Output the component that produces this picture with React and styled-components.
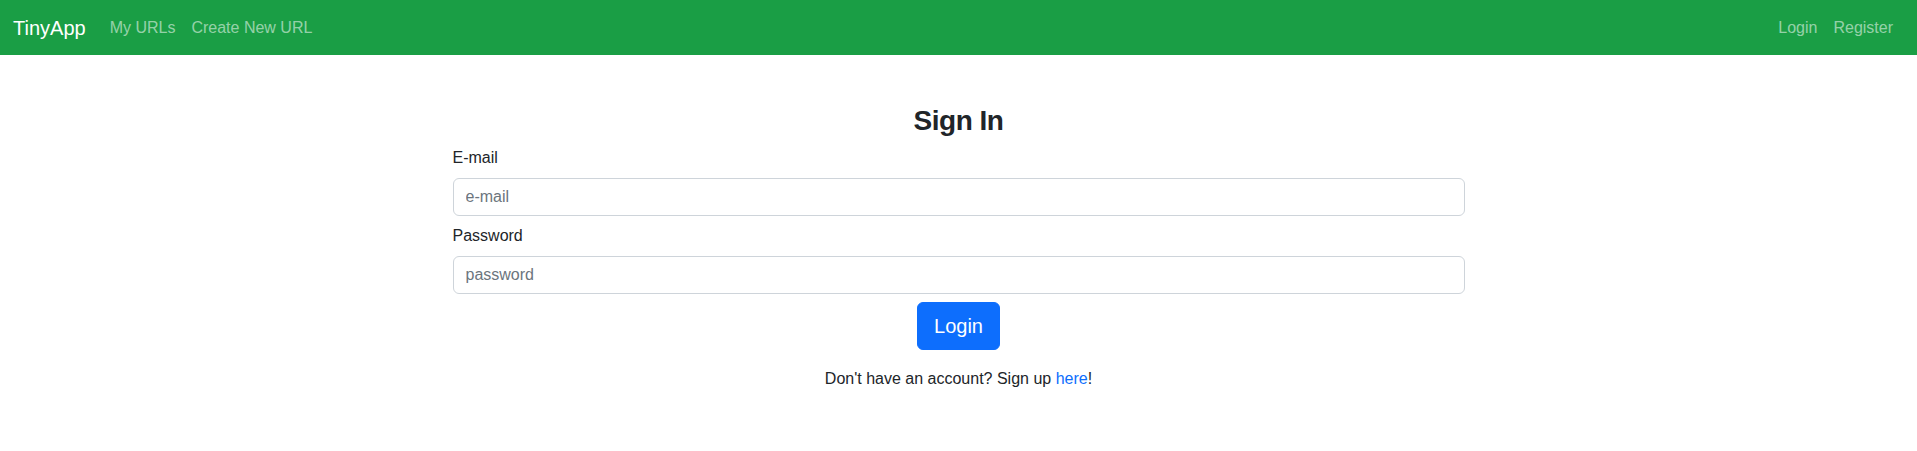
import styled, { createGlobalStyle } from 'styled-components';

const GlobalStyle = createGlobalStyle`
    * {
        box-sizing: border-box;
    }
    body {
        margin: 0;
        background: #FFFFFF;
        color: #212529;
        font-family: 'Liberation Sans', Arial, sans-serif;
        font-size: 16px;
        line-height: 1.5;
    }
`

function App() {
    return (
        <>
            <GlobalStyle />
            <Navbar>
                <NavGroup>
                    <Brand href="#">TinyApp</Brand>
                    <NavLink href="#">My URLs</NavLink>
                    <NavLink href="#">Create New URL</NavLink>
                </NavGroup>
                <NavGroup>
                    <NavLink href="#">Login</NavLink>
                    <NavLink href="#">Register</NavLink>
                </NavGroup>
            </Navbar>
            <Main>
                <Titulo>Sign In</Titulo>
                <Form onSubmit={(e) => e.preventDefault()}>
                    <Label htmlFor="email">E-mail</Label>
                    <Input id="email" type="text" placeholder="e-mail" />
                    <Label htmlFor="password" $spaced>Password</Label>
                    <Input id="password" type="password" placeholder="password" />
                    <Button type="submit">Login</Button>
                </Form>
                <Aviso>
                    Don't have an account? Sign up <TextLink href="#">here</TextLink>!
                </Aviso>
            </Main>
        </>
    );
}

export default App;

const Navbar = styled.nav`
    height: 55px;
    background-color: #1a9e45;
    display: flex;
    align-items: center;
    justify-content: space-between;
    padding: 0 16px 0 12px;
`

const NavGroup = styled.div`
    display: flex;
    align-items: center;
`

const Brand = styled.a`
    font-size: 20px;
    line-height: 30px;
    color: #FFFFFF;
    text-decoration: none;
    margin-right: 16px;
    margin-left: 1px;
`

const NavLink = styled.a`
    font-size: 16px;
    line-height: 24px;
    padding: 8px;
    color: rgba(255, 255, 255, 0.55);
    text-decoration: none;
`

const Main = styled.main`
    display: flex;
    flex-direction: column;
    align-items: center;
    padding-top: 49px;
`

const Titulo = styled.h3`
    margin: 0 0 8px;
    font-size: 28px;
    font-weight: 700;
    line-height: 1.2;
    letter-spacing: -0.5px;
    color: #212529;
`

const Form = styled.form`
    width: 1012px;
    display: flex;
    flex-direction: column;
`

const Label = styled.label`
    display: block;
    margin: ${(props) => (props.$spaced ? '8px' : '0')} 0 8px;
    font-size: 16px;
    line-height: 24px;
    color: #212529;
`

const Input = styled.input`
    display: block;
    width: 100%;
    height: 38px;
    padding: 6px 12px;
    font-family: 'Liberation Sans', Arial, sans-serif;
    font-size: 16px;
    color: #212529;
    background: #FFFFFF;
    border: 1px solid #ced4da;
    border-radius: 6px;
    outline: none;
    &::placeholder {
        color: #6c757d;
    }
`

const Button = styled.button`
    align-self: center;
    margin-top: 8px;
    height: 48px;
    padding: 8px 16px;
    font-family: 'Liberation Sans', Arial, sans-serif;
    font-size: 20px;
    line-height: 30px;
    color: #FFFFFF;
    background-color: #0d6efd;
    border: 1px solid #0d6efd;
    border-radius: 6px;
    cursor: pointer;
`

const Aviso = styled.p`
    margin: 17px 0 0;
    font-size: 16px;
    line-height: 24px;
    color: #212529;
`

const TextLink = styled.a`
    color: #0d6efd;
    text-decoration: none;
`
